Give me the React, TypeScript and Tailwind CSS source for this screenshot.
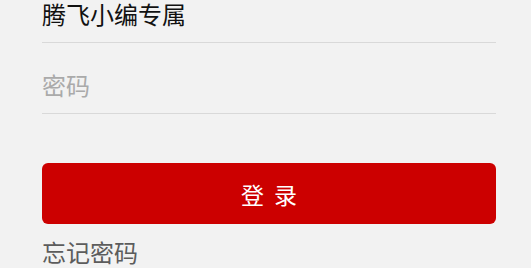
import React from "react";

export default function App() {
  const font = { fontFamily: '"Noto Sans CJK SC", "Noto Sans", sans-serif' };
  return (
    <div className="w-[531px] h-[268px] overflow-hidden bg-[#f2f2f2]" style={font}>
      <div className="ml-[42px] w-[454px] flex flex-col">
        <div className="h-[43px] flex items-end border-b border-[#d9d9d9] pb-[12px]">
          <input
            readOnly
            value="腾飞小编专属"
            className="w-full bg-transparent outline-none text-[24px] leading-[32px] text-[#111]"
          />
        </div>
        <div className="h-[71px] flex items-end border-b border-[#d9d9d9] pb-[12px]">
          <input
            readOnly
            type="password"
            placeholder="密码"
            className="w-full bg-transparent outline-none text-[24px] leading-[32px] text-[#111] placeholder:text-[#aaaaaa]"
          />
        </div>
        <button className="mt-[49px] h-[61px] w-full rounded-[6px] bg-[#cc0000] text-white text-[23px] leading-[32px] flex items-center justify-center gap-[10px]">
          <span>登</span>
          <span>录</span>
        </button>
        <div className="mt-[12px] text-[24px] leading-[32px] text-[#5c5c5c]">忘记密码</div>
      </div>
    </div>
  );
}
